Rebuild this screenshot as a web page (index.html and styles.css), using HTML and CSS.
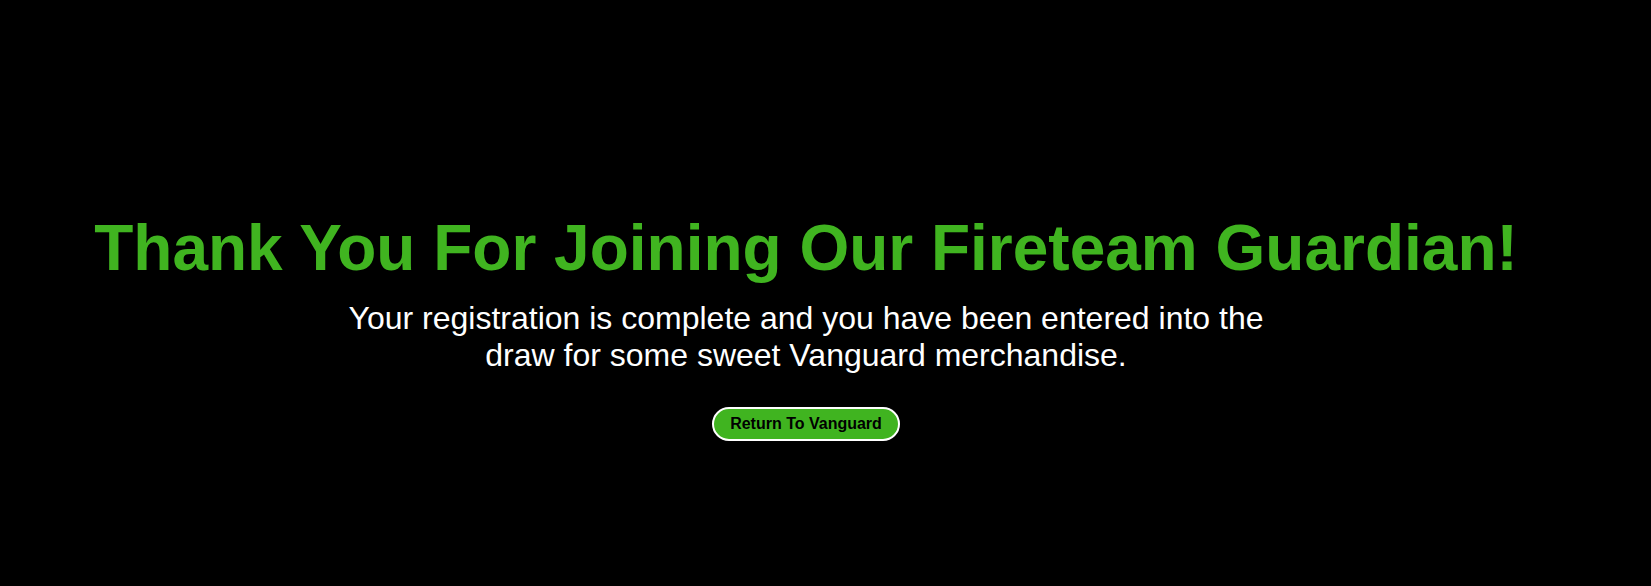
FILE: index.html
```html
<!DOCTYPE html>
<html lang="en">
<head>
<meta charset="utf-8">
<title>Thank You</title>
<link rel="stylesheet" href="styles.css">
</head>
<body>
<main class="thanks">
  <h1 class="thanks-title">Thank You For Joining Our Fireteam Guardian!</h1>
  <p class="thanks-text">Your registration is complete and you have been entered into the draw for some sweet Vanguard merchandise.</p>
  <a class="thanks-button" href="#">Return To Vanguard</a>
</main>
</body>
</html>
```

FILE: styles.css
```css
html, body {
  margin: 0;
  padding: 0;
  background: #000;
  height: 100%;
}

body {
  font-family: "Liberation Sans", Arial, sans-serif;
  color: #fff;
}

.thanks {
  display: flex;
  flex-direction: column;
  align-items: center;
  text-align: center;
  padding: 211px 39px 0 0;
}

.thanks-title {
  margin: 0;
  font-size: 64px;
  font-weight: bold;
  line-height: normal;
  color: #40b420;
  white-space: nowrap;
}

.thanks-text {
  margin: 15px 0 0;
  max-width: 930px;
  font-size: 32px;
  line-height: normal;
  color: #fff;
}

.thanks-button {
  margin-top: 33px;
  display: inline-block;
  padding: 6px 16px;
  background: #40b420;
  border: 2px solid #fff;
  border-radius: 999px;
  color: #000;
  font-size: 16px;
  font-weight: bold;
  line-height: 18px;
  text-decoration: none;
}
```
